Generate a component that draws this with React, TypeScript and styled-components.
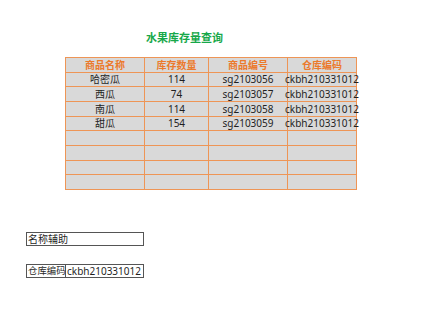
import React from 'react';
import styled, { createGlobalStyle } from 'styled-components';

const GlobalStyle = createGlobalStyle`
  body {
    margin: 0;
    background: #ffffff;
    font-family: "Noto Sans", "Noto Sans CJK SC", sans-serif;
  }
`;

const Sheet = styled.div`
  width: 427px;
  height: 317px;
  padding-top: 30px;
  box-sizing: border-box;
`;

const Title = styled.div`
  margin-left: 146px;
  height: 14px;
  line-height: 14px;
  font-size: 11px;
  font-weight: bold;
  color: #17a84a;
  font-family: "Noto Sans CJK SC", sans-serif;
`;

const Grid = styled.div`
  margin: 13px 0 0 65px;
  width: 292px;
  display: grid;
  grid-template-columns: 78px 63px 78px 68px;
  grid-auto-rows: 13.67px;
  gap: 1px;
  padding: 1px;
  box-sizing: border-box;
  background: #ee9556;
`;

const Cell = styled.div<{ $head?: boolean }>`
  background: #d9d9d9;
  display: flex;
  align-items: center;
  justify-content: center;
  white-space: nowrap;
  font-size: 10px;
  font-weight: ${(p) => (p.$head ? 'bold' : 'normal')};
  color: ${(p) => (p.$head ? '#ec7a2c' : '#1f1f1f')};
  line-height: 1;
`;

const Helper = styled.div<{ $top: number }>`
  margin: ${(p) => p.$top}px 0 0 26px;
  width: 118px;
  height: 14px;
  border: 1px solid #555555;
  box-sizing: border-box;
  display: flex;
  font-size: 10px;
  color: #1f1f1f;
  line-height: 12px;
`;

const HelperLabel = styled.div<{ $split?: boolean }>`
  width: ${(p) => (p.$split ? '39px' : 'auto')};
  border-right: ${(p) => (p.$split ? '1px solid #555555' : 'none')};
  font-size: ${(p) => (p.$split ? '9.4px' : '10px')};
  padding-left: 1px;
  white-space: nowrap;
  box-sizing: border-box;
`;

const HelperValue = styled.div`
  padding-left: 1px;
  white-space: nowrap;
`;

const headers = ['商品名称', '库存数量', '商品编号', '仓库编码'];
const rows = [
  ['哈密瓜', '114', 'sg2103056', 'ckbh210331012'],
  ['西瓜', '74', 'sg2103057', 'ckbh210331012'],
  ['南瓜', '114', 'sg2103058', 'ckbh210331012'],
  ['甜瓜', '154', 'sg2103059', 'ckbh210331012'],
  ['', '', '', ''],
  ['', '', '', ''],
  ['', '', '', ''],
  ['', '', '', ''],
];

export default function App() {
  return (
    <Sheet>
      <GlobalStyle />
      <Title>水果库存量查询</Title>
      <Grid>
        {headers.map((h) => (
          <Cell key={h} $head>
            {h}
          </Cell>
        ))}
        {rows.map((r, i) =>
          r.map((c, j) => <Cell key={`${i}-${j}`}>{c}</Cell>)
        )}
      </Grid>
      <Helper $top={42}>
        <HelperLabel>名称辅助</HelperLabel>
      </Helper>
      <Helper $top={18}>
        <HelperLabel $split>仓库编码</HelperLabel>
        <HelperValue>ckbh210331012</HelperValue>
      </Helper>
    </Sheet>
  );
}
